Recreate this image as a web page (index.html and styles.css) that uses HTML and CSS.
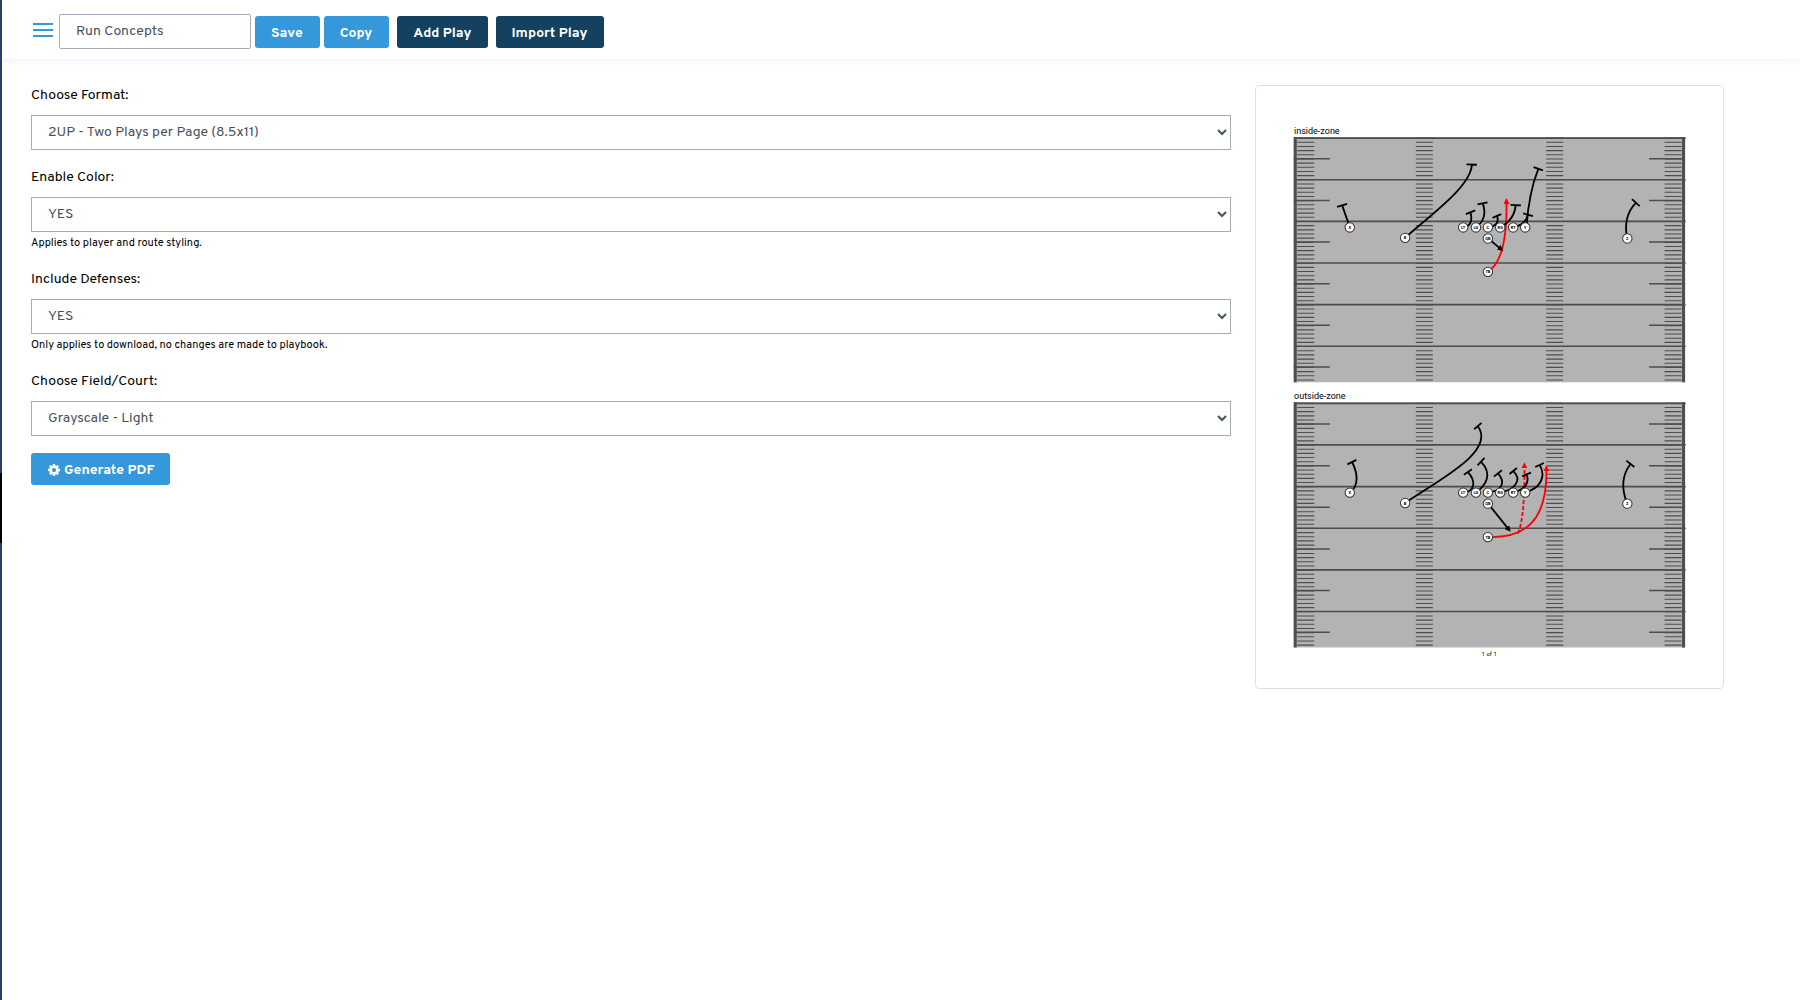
FILE: index.html
```html
<!DOCTYPE html>
<html lang="en">
<head>
    <meta charset="UTF-8">
    <meta name="viewport" content="width=device-width, initial-scale=1.0">
    <title>Run Concepts</title>
    <link rel="stylesheet" href="styles.css">
</head>
<body>
    <aside class="sidebar"></aside>

    <div class="page">
        <header class="topbar">
            <button type="button" class="menu-toggle" aria-label="Toggle menu">
                <svg width="20" height="14" viewBox="0 0 20 14"><path d="M0 1h20M0 7h20M0 13h20" stroke="#3498db" stroke-width="2"/></svg>
            </button>
            <input type="text" class="form-control playbook-name" value="Run Concepts" aria-label="Playbook name">
            <button type="button" class="btn btn-primary">Save</button>
            <button type="button" class="btn btn-primary">Copy</button>
            <div class="play-actions">
                <button type="button" class="btn btn-dark">Add Play</button>
                <button type="button" class="btn btn-dark">Import Play</button>
            </div>
        </header>

        <main class="content">
            <form class="options">
                <div class="form-group">
                    <label for="format">Choose Format:</label>
                    <select id="format" class="form-control">
                        <option>2UP - Two Plays per Page (8.5x11)</option>
                    </select>
                </div>
                <div class="form-group">
                    <label for="color">Enable Color:</label>
                    <select id="color" class="form-control">
                        <option>YES</option>
                        <option>NO</option>
                    </select>
                    <small>Applies to player and route styling.</small>
                </div>
                <div class="form-group">
                    <label for="defenses">Include Defenses:</label>
                    <select id="defenses" class="form-control">
                        <option>YES</option>
                        <option>NO</option>
                    </select>
                    <small>Only applies to download, no changes are made to playbook.</small>
                </div>
                <div class="form-group">
                    <label for="field">Choose Field/Court:</label>
                    <select id="field" class="form-control">
                        <option>Grayscale - Light</option>
                    </select>
                </div>
                <button type="button" class="btn btn-primary btn-generate">
                    <svg class="icon" viewBox="0 0 1536 1536"><path fill="#fff" d="M1024 768q0-106-75-181t-181-75-181 75-75 181 75 181 181 75 181-75 75-181zM1536 659v222q0 12-8 23t-20 13l-185 28q-19 54-39 91 35 50 107 138 10 12 10 25t-9 23q-27 37-99 108t-94 71q-12 0-26-9l-138-108q-44 23-91 38-16 136-29 186-7 28-36 28h-222q-14 0-24.500-8.500t-11.500-21.500l-28-184q-49-16-90-37l-141 107q-10 9-25 9-14 0-25-11-126-114-165-168-7-10-7-23 0-12 8-23 15-21 51-66.500t54-70.500q-27-50-41-99l-183-27q-13-2-21-12.500t-8-23.500v-222q0-12 8-23t19-13l186-28q14-46 39-92-40-57-107-138-10-12-10-24 0-10 9-23 26-36 98.500-107.500t94.500-71.500q13 0 26 10l138 107q44-23 91-38 16-136 29-186 7-28 36-28h222q14 0 24.500 8.500t11.500 21.500l28 184q49 16 90 37l142-107q9-9 24-9 13 0 25 10 129 119 165 170 7 8 7 22 0 12-8 23-15 21-51 66.500t-54 70.500q26 50 41 98l183 28q13 2 21 12.500t8 23.500z"/></svg>
                    Generate PDF
                </button>
            </form>

            <div class="preview">
                <svg class="sheet" viewBox="0 0 467 601" role="img" aria-label="Page preview">
                    <defs>
                        <marker id="arrow" viewBox="0 0 6 6" refX="1" refY="3" markerWidth="6" markerHeight="6" markerUnits="userSpaceOnUse" orient="auto"><path d="M0 0l6 3-6 3z"/></marker>
                        <marker id="arrow-red" viewBox="0 0 6 6" refX="1" refY="3" markerWidth="6" markerHeight="6" markerUnits="userSpaceOnUse" orient="auto"><path d="M0 0l6 3-6 3z" fill="#f00"/></marker>

                        <!-- field with yard lines, hashes and sidelines -->
                        <g id="turf">
                            <rect width="391" height="245" fill="#b3b3b3"/>
                            <path class="hashes" d="M12 .5V245M130.500 .5V245M260.700 .5V245M379 .5V245"/>
                            <path class="half-lines" d="M18 21V245M373 21V245"/>
                            <path class="yard-lines" d="M196 .2V245"/>
                            <path class="sidelines" d="M1.500 0V245M389.500 0V245"/>
                        </g>

                        <!-- offense formation -->
                        <g id="formation" class="players">
                            <circle cx="56" cy="90.300" r="4.700"/><text x="56" y="91.800">X</text>
                            <circle cx="111.300" cy="100.700" r="4.700"/><text x="111.300" y="102.200">B</text>
                            <circle cx="169.300" cy="90.300" r="4.700"/><text x="169.300" y="91.800">LT</text>
                            <circle cx="182" cy="90.300" r="4.700"/><text x="182" y="91.800">LG</text>
                            <circle cx="194" cy="90.300" r="4.700"/><text x="194" y="91.800">C</text>
                            <circle cx="206.300" cy="90.300" r="4.700"/><text x="206.300" y="91.800">RG</text>
                            <circle cx="219.300" cy="90.300" r="4.700"/><text x="219.300" y="91.800">RT</text>
                            <circle cx="231.300" cy="90.300" r="4.700"/><text x="231.300" y="91.800">Y</text>
                            <circle cx="194" cy="101.300" r="4.700"/><text x="194" y="102.800">QB</text>
                            <circle cx="194" cy="134.700" r="4.700"/><text x="194" y="136.200">TB</text>
                            <circle cx="333.300" cy="101.300" r="4.700"/><text x="333.300" y="102.800">Z</text>
                        </g>
                    </defs>

                    <text class="play-name" x="38" y="48">inside-zone</text>
                    <g transform="translate(37.700 51)">
                        <use href="#turf"/>
                        <path class="route run" marker-end="url(#arrow-red)" d="M194 134.700C208 126 213 102 212.600 66"/>
                        <path class="route" d="M56 90L48.300 68M43.300 69.700L53.300 66.700"/>
                        <path class="route" d="M111.300 100.700C135 79 177 50 178 27.500M172.700 27.300L183 27.700"/>
                        <path class="route" d="M169.600 90.300Q180 88 176.600 75.300M172 77L181.300 73.300"/>
                        <path class="route" d="M182 90Q194 82 189 66.500M183.600 67.300L193.600 65.300"/>
                        <path class="route" d="M194 90Q206 89 203.300 79M198.600 80.700L207.300 77"/>
                        <path class="route" d="M206.300 90.300Q221 82 221.600 68M216.600 67.700L227 68.300"/>
                        <path class="route" d="M219.300 90.300Q231 88 234 78M229.300 76.300L239 79"/>
                        <path class="route" d="M232.500 90Q235 55 244.300 32M239.600 30L249 33.300"/>
                        <path class="route" d="M333 101Q329 79 341.600 66M338 62L345.600 69"/>
                        <path class="route" marker-end="url(#arrow)" d="M194 101L205.500 110.700"/>
                        <use href="#formation"/>
                    </g>

                    <text class="play-name" x="38" y="313">outside-zone</text>
                    <g transform="translate(37.700 316)">
                        <use href="#turf"/>
                        <path class="route run" marker-end="url(#arrow-red)" d="M194 134.700C232 136 253 118 252.500 68"/>
                        <path class="route run dashed" marker-end="url(#arrow-red)" d="M224 131Q231 115 230.500 65"/>
                        <path class="route" d="M57 90Q68 79 58.300 59.700M53.600 62L62.600 57.600"/>
                        <path class="route" d="M111.300 100.700C140 80 203 50 184 24M180.300 27L187.600 20.600"/>
                        <path class="route" d="M169.600 90C180 90 183 80 174.300 70M170 72.300L178 67"/>
                        <path class="route" d="M182 90C192 83 199 72 187.300 59.500M183.600 63L190.600 55.600"/>
                        <path class="route" d="M194 90C208 89 212 80 204.300 71.300M200 74.300L208 68"/>
                        <path class="route" d="M206 90C220 88 229 78 219.600 69M215.600 71.700L223 65.700"/>
                        <path class="route" d="M219 90C231 88 236 80 232.600 72.300M228.300 74L237 70.300"/>
                        <path class="route" d="M231 90C247 86 252 74 246 63M241.300 64.700L250 60.700"/>
                        <path class="route" d="M333 101Q324 78 336.300 62M332.300 58.300L340.300 64.700"/>
                        <path class="route" marker-end="url(#arrow)" d="M194 101L213.600 125.500"/>
                        <use href="#formation"/>
                    </g>

                    <text class="page-number" x="233" y="570">1 of 1</text>
                </svg>
            </div>
        </main>
    </div>
</body>
</html>
```
FILE: styles.css
```css
* {
    box-sizing: border-box;
}
body {
    display: flex;
    min-height: 100vh;
    margin: 0;
    background: #fff;
    color: #000;
    font-family: Overpass, Roboto, sans-serif;
    font-size: 14px;
    line-height: 21px;
}
.sidebar {
    width: 2px;
    background: linear-gradient(#2c3e60 473px, #000 473px, #000 543px, #2c3e60 543px);
}
.page {
    flex: 1;
    min-width: 0;
}
.topbar {
    display: flex;
    align-items: center;
    gap: 4px;
    padding: 14px 28px 10px 31px;
    box-shadow: 0 1px 8px rgba(90, 120, 190, 0.12);
}
.menu-toggle {
    display: flex;
    padding: 0;
    margin: 0 2px 3px 0;
    border: none;
    background: none;
    cursor: pointer;
}
.form-control {
    display: block;
    width: 100%;
    height: 35px;
    padding: 0 16px;
    border: 1px solid #a4adbb;
    border-radius: 0;
    background: #fff;
    color: #495057;
    font-family: inherit;
    font-size: 14px;
}
select.form-control {
    padding: 0 0 0 12px;
}
.playbook-name {
    width: 192px;
    border-radius: 2px;
}
.btn {
    height: 32px;
    padding: 2px 16px 0;
    border: none;
    border-radius: 3px;
    color: #fff;
    font-family: inherit;
    font-size: 14px;
    font-weight: bold;
    cursor: pointer;
}
.topbar .btn {
    margin-top: 1px;
}
.btn-primary {
    padding: 2px 17px 0 16px;
    background: #3498db;
}
.btn-dark {
    background: #154160;
}
.play-actions {
    display: flex;
    gap: 8px;
    margin-left: 4px;
}
.content {
    display: grid;
    grid-template-columns: 23fr 9fr;
    align-items: start;
    gap: 24px;
    padding: 26px 76px 24px 29px;
}
.form-group {
    margin-bottom: 17px;
}
.form-group label {
    display: block;
    margin-bottom: 9px;
}
.form-group small {
    display: block;
    padding-top: 2px;
    font-size: 11px;
    line-height: 18px;
}
.btn-generate {
    display: flex;
    align-items: center;
    gap: 4px;
    padding: 2px 16px 0 17px;
}
.icon {
    width: 12px;
    height: 12px;
}
.preview {
    border: 1px solid #dee2e6;
    border-radius: 4px;
}
.sheet {
    display: block;
    width: 100%;
    height: auto;
    font-family: Roboto, sans-serif;
}
.play-name {
    font-size: 9px;
}
.page-number {
    font-size: 6px;
    text-anchor: middle;
}
.hashes,
.half-lines,
.yard-lines,
.sidelines {
    fill: none;
    stroke: #4d4d4d;
}
.hashes {
    stroke-width: 17px;
    stroke-dasharray: 1.1 3.066;
}
.half-lines {
    stroke-width: 36px;
    stroke-dasharray: 1.5 40.1;
}
.yard-lines {
    stroke-width: 391px;
    stroke-dasharray: 1.7 39.9;
}
.sidelines {
    stroke-width: 3px;
}
.route {
    fill: none;
    stroke: #000;
    stroke-width: 1.8px;
}
.run {
    stroke: #f00;
}
.dashed {
    stroke-dasharray: 4 2;
}
.players circle {
    fill: #fff;
    stroke: #333;
    stroke-width: 1px;
}
.players text {
    font-size: 4px;
    font-weight: bold;
    text-anchor: middle;
}
```
